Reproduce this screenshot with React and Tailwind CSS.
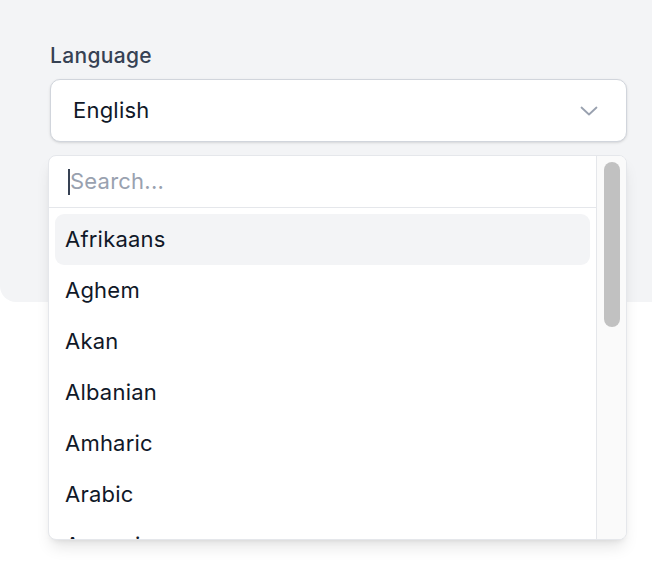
import React, { useState } from 'react';

const LANGUAGES = [
    'Afrikaans',
    'Aghem',
    'Akan',
    'Albanian',
    'Amharic',
    'Arabic',
    'Armenian',
    'Assamese',
    'Asturian',
];

const Chevron = () => (
    <svg width="18" height="10" viewBox="0 0 18 10" fill="none" className="text-gray-400">
        <path d="M1.5 1.5L9 8.5L16.5 1.5" stroke="currentColor" strokeWidth="1.8" strokeLinecap="round" strokeLinejoin="round" />
    </svg>
);

const App = () => {
    const [selected] = useState('English');
    const [active] = useState('Afrikaans');
    const [query, setQuery] = useState('');

    return (
        <div className="min-h-screen bg-white font-['Inter',sans-serif]">
            {/* settings panel behind the open menu */}
            <div className="relative h-[302px] bg-gray-100 rounded-bl-2xl pt-[44px] pl-[50px] pr-[25px]">
                <label className="block text-[21px] leading-[24px] font-medium tracking-[0.015em] text-gray-700">Language</label>
                <button className="mt-[11px] flex h-[63px] w-[577px] items-center justify-between rounded-[10px] border border-gray-300 bg-white pl-[22px] pr-[28px] shadow-sm">
                    <span className="text-[22px] tracking-[0.01em] text-gray-900">{selected}</span>
                    <Chevron />
                </button>

                {/* open dropdown */}
                <div className="absolute left-[48px] top-[155px] z-10 flex h-[385px] w-[579px] overflow-hidden rounded-[8px] border border-gray-200 bg-white shadow-lg">
                    <div className="flex flex-1 flex-col">
                        <div className="flex h-[52px] items-center border-b border-gray-200 pl-[19px] shrink-0">
                            <span className="h-[26px] w-[2px] bg-gray-700"></span>
                            <input
                                value={query}
                                onChange={(e) => setQuery(e.target.value)}
                                placeholder="Search..."
                                className="w-full bg-transparent text-[22px] tracking-[0.01em] text-gray-900 placeholder:text-gray-400 outline-none"
                            />
                        </div>
                        <ul className="px-[6px] pt-[6px]">
                            {LANGUAGES.map((lang) => (
                                <li
                                    key={lang}
                                    className={`flex h-[51px] items-center rounded-[9px] pl-[10px] text-[22px] tracking-[0.01em] text-gray-900 ${lang === active ? 'bg-gray-100' : ''}`}
                                >
                                    {lang}
                                </li>
                            ))}
                        </ul>
                    </div>
                    {/* scrollbar */}
                    <div className="w-[30px] shrink-0 border-l border-gray-200 bg-[#fafafa] pt-[6px]">
                        <div className="mx-auto h-[165px] w-[16px] rounded-full bg-[#c1c1c1]"></div>
                    </div>
                </div>
            </div>
        </div>
    );
};

export default App;
